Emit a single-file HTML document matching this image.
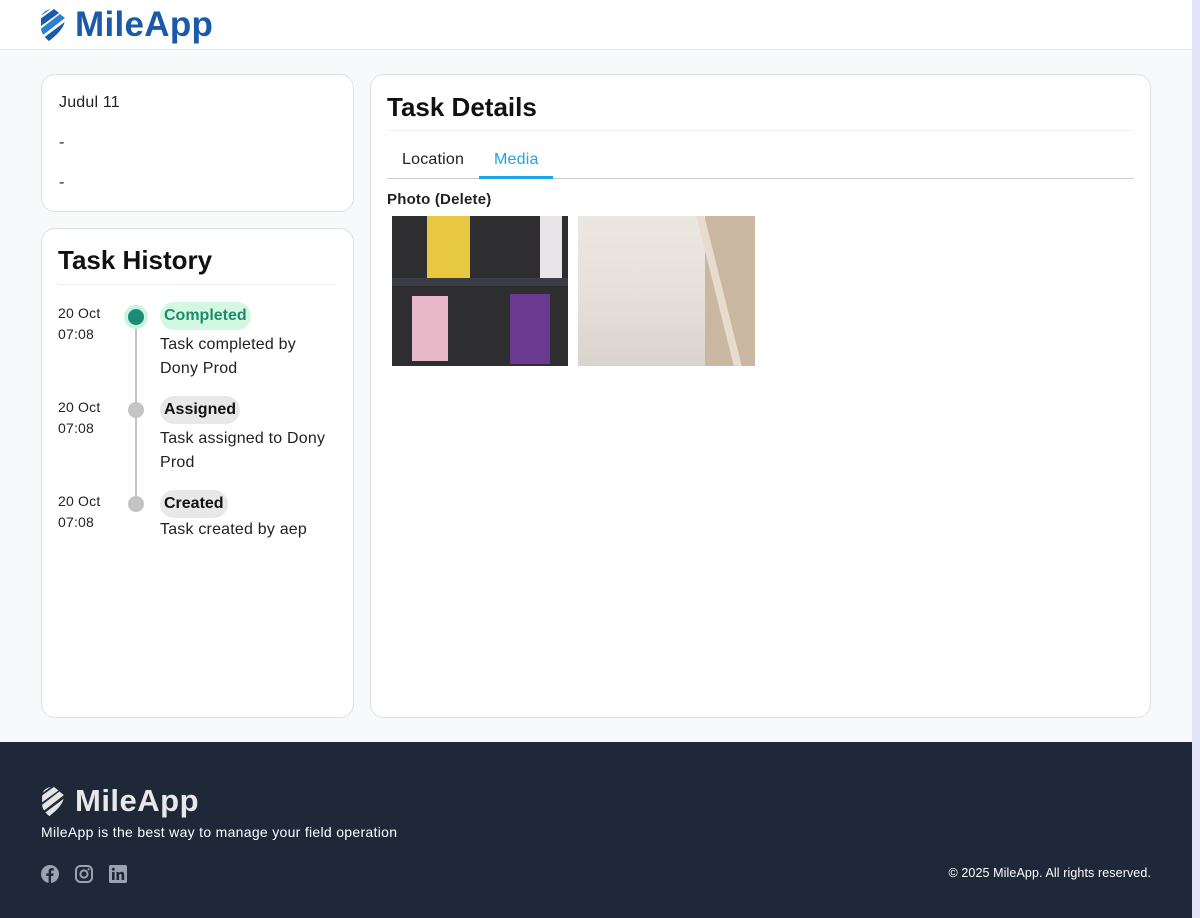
<!DOCTYPE html>
<html><head><meta charset="utf-8"><style>
*{box-sizing:border-box;margin:0;padding:0}
body{width:1200px;height:918px;overflow:hidden;background:#f8f9fb;font-family:"Liberation Sans",Arial,sans-serif;color:#111;position:relative}
.hdr{position:absolute;left:0;top:0;width:1192px;height:50px;background:#fff;border-bottom:1px solid #e5e7eb}
.logo{position:absolute;left:40px;top:5px;display:flex;align-items:center}
.logo span{font-size:35px;font-weight:bold;color:#1a5aa8;margin-left:9px;letter-spacing:0.3px}
.card{position:absolute;background:#fff;border:1px solid #dcdfe4;border-radius:14px}
.sb{position:absolute;left:1192px;top:0;width:8px;height:918px;background:#e4e4f8}
.t{position:absolute;font-size:16px;color:#222;letter-spacing:0.2px}
.pill{position:absolute;height:28px;border-radius:14px;padding:0 4px;font-size:16px;font-weight:bold;line-height:28px;background:#e8e8e8}
.dot{position:absolute;width:16px;height:16px;border-radius:50%;background:#c4c4c4}
.foot{position:absolute;left:0;top:742px;width:1192px;height:176px;background:#1e2839;color:#fff}
</style></head><body>
<div class="hdr"><div class="logo">
<svg width="26" height="34" viewBox="0 0 26 34"><defs><clipPath id="c"><path d="M13 1 C20 1 25 5 25 11 C25 19 17 27 9 33 C5 30 1 25 1 20 L1 11 C1 5 6 1 13 1Z"/></clipPath></defs><g clip-path="url(#c)"><path d="M-6 6 L8 -4 L12 0 L-2 10Z" fill="#2f7fd0"/><path d="M-4 14 L14 1 L19 5 L1 18Z" fill="#1a5aa8"/><path d="M-2 23 L20 6 L25 10 L3 27Z" fill="#2f7fd0"/><path d="M2 31 L26 13 L30 18 L7 36Z" fill="#1a5aa8"/></g></svg>
<span>MileApp</span></div></div>

<div class="card" style="left:41px;top:74px;width:313px;height:138px"></div>
<div class="t" style="left:59px;top:94px">Judul 11</div>
<div class="t" style="left:59px;top:134px">-</div>
<div class="t" style="left:59px;top:174px">-</div>

<div class="card" style="left:41px;top:228px;width:313px;height:490px"></div>
<div style="position:absolute;left:58px;top:245px;font-size:26px;font-weight:bold">Task History</div>
<div style="position:absolute;left:58px;top:284px;width:278px;height:1px;background:#eee"></div>
<div style="position:absolute;left:135px;top:317px;width:2px;height:188px;background:#c4c4c4"></div>
<div class="t" style="left:58px;top:303px;font-size:14px;line-height:21px">20 Oct<br>07:08</div>
<div class="t" style="left:58px;top:397px;font-size:14px;line-height:21px">20 Oct<br>07:08</div>
<div class="t" style="left:58px;top:491px;font-size:14px;line-height:21px">20 Oct<br>07:08</div>
<div class="dot" style="left:124px;top:305px;width:24px;height:24px;background:#c9f5dc"></div>
<div class="dot" style="left:128px;top:309px;background:#1d8a7a"></div>
<div class="dot" style="left:128px;top:402px"></div>
<div class="dot" style="left:128px;top:496px"></div>
<div class="pill" style="left:160px;top:302px;background:#d3f8e2;color:#1d8a6e">Completed</div>
<div class="pill" style="left:160px;top:396px">Assigned</div>
<div class="pill" style="left:160px;top:490px">Created</div>
<div class="t" style="left:160px;top:333px;line-height:24px">Task completed by<br>Dony Prod</div>
<div class="t" style="left:160px;top:427px;line-height:24px">Task assigned to Dony<br>Prod</div>
<div class="t" style="left:160px;top:521px">Task created by aep</div>

<div class="card" style="left:370px;top:74px;width:781px;height:644px"></div>
<div style="position:absolute;left:387px;top:92px;font-size:26px;font-weight:bold">Task Details</div>
<div style="position:absolute;left:387px;top:130px;width:747px;height:1px;background:#f0f0f0"></div>
<div class="t" style="left:402px;top:151px">Location</div>
<div class="t" style="left:494px;top:151px;color:#1ea5e9">Media</div>
<div style="position:absolute;left:387px;top:178px;width:747px;height:1px;background:#ccc"></div>
<div style="position:absolute;left:479px;top:176px;width:74px;height:3px;background:#1ea5e9"></div>
<div class="t" style="left:387px;top:191px;font-weight:bold;font-size:15px">Photo (Delete)</div>
<div style="position:absolute;left:392px;top:216px;width:176px;height:150px;background:#2e2e30;overflow:hidden">
<div style="position:absolute;left:35px;top:0;width:43px;height:62px;background:#e8c840"></div>
<div style="position:absolute;left:148px;top:0;width:22px;height:62px;background:#e8e4e8"></div>
<div style="position:absolute;left:0;top:62px;width:176px;height:8px;background:#3a3d44"></div>
<div style="position:absolute;left:20px;top:80px;width:36px;height:65px;background:#e8b8c8"></div>
<div style="position:absolute;left:118px;top:78px;width:40px;height:70px;background:#6a3a90"></div>
</div>
<div style="position:absolute;left:578px;top:216px;width:177px;height:150px;background:linear-gradient(180deg,#ede7e2 0%,#e6e0da 55%,#d9d3cd 100%);overflow:hidden">
<div style="position:absolute;left:127px;top:0;width:50px;height:150px;background:#c9b7a2"></div>
<div style="position:absolute;left:137px;top:0;width:8px;height:150px;background:#e7dccd;transform:skewX(14deg)"></div>
</div>

<div class="foot">
<div style="position:absolute;left:41px;top:41px;display:flex;align-items:center">
<svg width="24" height="31" viewBox="0 0 26 34"><defs><clipPath id="d"><path d="M13 1 C20 1 25 5 25 11 C25 19 17 27 9 33 C5 30 1 25 1 20 L1 11 C1 5 6 1 13 1Z"/></clipPath></defs><g clip-path="url(#d)" fill="#e5e5e5"><path d="M-6 6 L8 -4 L12 0 L-2 10Z"/><path d="M-4 14 L14 1 L19 5 L1 18Z"/><path d="M-2 23 L20 6 L25 10 L3 27Z"/><path d="M2 31 L26 13 L30 18 L7 36Z"/></g></svg>
<span style="font-size:31px;font-weight:bold;color:#e8e8e8;margin-left:10px;letter-spacing:0.5px">MileApp</span></div>
<div style="position:absolute;left:41px;top:82px;font-size:14px;letter-spacing:0.3px">MileApp is the best way to manage your field operation</div>
<svg style="position:absolute;left:41px;top:123px" width="18" height="18" viewBox="0 0 18 18"><circle cx="9" cy="9" r="9" fill="#9aa3b0"/><path d="M10 18V11h2.2l.4-2.6H10V6.8c0-.7.3-1.3 1.4-1.3h1.3V3.3c-.6-.1-1.2-.2-1.9-.2-2 0-3.2 1.2-3.2 3.3v2H5.4V11h2.2v7Z" fill="#1e2839"/></svg>
<svg style="position:absolute;left:75px;top:123px" width="18" height="18" viewBox="0 0 18 18"><rect x="1" y="1" width="16" height="16" rx="4.5" fill="none" stroke="#9aa3b0" stroke-width="2"/><circle cx="9" cy="9" r="3.6" fill="none" stroke="#9aa3b0" stroke-width="2"/><circle cx="13.6" cy="4.4" r="1.1" fill="#9aa3b0"/></svg>
<svg style="position:absolute;left:109px;top:123px" width="18" height="18" viewBox="0 0 18 18"><rect width="18" height="18" rx="1.5" fill="#9aa3b0"/><rect x="3" y="7" width="2.6" height="8" fill="#1e2839"/><circle cx="4.3" cy="4.2" r="1.5" fill="#1e2839"/><path d="M7.5 7h2.5v1.2c.5-.9 1.5-1.4 2.6-1.4 2 0 2.6 1.3 2.6 3.2V15h-2.6v-4.4c0-1-.3-1.7-1.2-1.7-1 0-1.3.8-1.3 1.7V15H7.5Z" fill="#1e2839"/></svg>
<div style="position:absolute;right:41px;top:124px;font-size:12.5px;letter-spacing:0.1px">© 2025 MileApp. All rights reserved.</div>
</div>
<div class="sb"></div>
</body></html>
